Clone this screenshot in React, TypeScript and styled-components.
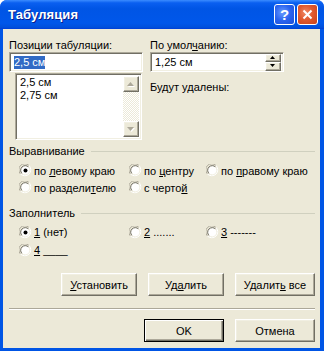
import React from 'react';
import styled, { createGlobalStyle, css } from 'styled-components';

const face = '#ECE9D8';

const GlobalStyle = createGlobalStyle`
  html, body {
    margin: 0;
    padding: 0;
    background: #fff;
  }
  body {
    font-family: "Liberation Sans", Arial, sans-serif;
    font-size: 11px;
    color: #000;
  }
`;

const sunken = css`
  box-sizing: border-box;
  border: 1px solid;
  border-color: #aca899 #fff #fff #aca899;
  box-shadow: inset 1px 1px #716f64, inset -1px -1px #f1efe2;
  background: #fff;
`;

const raised = css`
  box-sizing: border-box;
  border: 1px solid;
  border-color: #fff #716f64 #716f64 #fff;
  box-shadow: inset -1px -1px #aca899, inset 1px 1px #f1efe2;
  background: ${face};
`;

const Window = styled.div`
  width: 324px;
  height: 351px;
  box-sizing: border-box;
  display: flex;
  flex-direction: column;
  border-radius: 7px 7px 0 0;
  overflow: hidden;
  background: #0055e5;
`;

const TitleBar = styled.div`
  height: 29px;
  flex: none;
  display: flex;
  align-items: center;
  padding: 0 6px 0 8px;
  background: linear-gradient(
    to bottom,
    #3b8cff 0%,
    #0a5ff0 10%,
    #0055e5 30%,
    #0057ea 80%,
    #0050dc 94%,
    #003dd7 100%
  );
`;

const Title = styled.div`
  flex: 1;
  color: #fff;
  font-weight: bold;
  font-size: 13px;
  text-shadow: 1px 1px #0a1e8c;
  letter-spacing: 0.1px;
`;

const CapButton = styled.div<{ $red?: boolean }>`
  width: 21px;
  height: 21px;
  box-sizing: border-box;
  margin-left: 2px;
  border: 1px solid #fff;
  border-radius: 3px;
  display: flex;
  align-items: center;
  justify-content: center;
  color: #fff;
  font-weight: bold;
  font-size: 15px;
  background: ${(p) =>
    p.$red
      ? 'radial-gradient(circle at 40% 40%, #f08a66 0%, #e05a30 45%, #c8401a 100%)'
      : 'radial-gradient(circle at 40% 40%, #6a9cff 0%, #2a63ef 50%, #1a4fd8 100%)'};
`;

const Frame = styled.div`
  flex: 1;
  display: flex;
  padding: 0 4px 3px 3px;
`;

const Client = styled.div`
  flex: 1;
  background: ${face};
  padding: 10px 5px 0 6px;
  display: flex;
  flex-direction: column;
`;

const TopRow = styled.div`
  display: grid;
  grid-template-columns: 134px 134px;
  column-gap: 7px;
`;

const Column = styled.div`
  display: flex;
  flex-direction: column;
`;

const Label = styled.div<{ $mt?: number }>`
  height: 13px;
  line-height: 13px;
  margin-top: ${(p) => p.$mt ?? 0}px;
  white-space: nowrap;
`;

const U = styled.span`
  text-decoration: underline;
`;

const Field = styled.div`
  ${sunken};
  height: 20px;
  display: flex;
  align-items: center;
  padding: 0 2px 0 4px;
`;

const Selected = styled.span`
  background: #316ac5;
  color: #fff;
  line-height: 13px;
`;

const ListBox = styled.div`
  ${sunken};
  margin: 1px 0 0 6px;
  width: 127px;
  height: 67px;
  padding: 2px;
  display: flex;
`;

const Items = styled.div`
  flex: 1;
  padding-left: 2px;
`;

const Item = styled.div`
  height: 13px;
  line-height: 13px;
`;

const ScrollBar = styled.div`
  width: 16px;
  display: flex;
  flex-direction: column;
  justify-content: space-between;
  background: repeating-conic-gradient(#fff 0 25%, ${face} 0 50%) 0 0 / 2px 2px;
`;

const ScrollButton = styled.div`
  ${raised};
  width: 16px;
  height: 16px;
  display: flex;
  align-items: center;
  justify-content: center;
`;

const SpinBox = styled.div`
  display: flex;
  flex-direction: column;
  width: 16px;
  height: 17px;
  margin-left: auto;
`;

const SpinButton = styled.div`
  ${raised};
  flex: 1;
  display: flex;
  align-items: center;
  justify-content: center;
`;

const Group = styled.div<{ $mt: number }>`
  margin-top: ${(p) => p.$mt}px;
`;

const GroupHead = styled.div`
  display: flex;
  align-items: center;
  gap: 6px;
  height: 13px;
  line-height: 13px;
  &::after {
    content: '';
    flex: 1;
    border-top: 1px solid #d0d0bf;
  }
`;

const RadioGrid = styled.div<{ $row: number; $mt: number }>`
  display: grid;
  grid-template-columns: 110px 77px auto;
  grid-auto-rows: ${(p) => p.$row}px;
  padding-left: 10px;
  margin-top: ${(p) => p.$mt}px;
`;

const RadioItem = styled.label`
  display: flex;
  align-items: center;
  gap: 2px;
  white-space: nowrap;
`;

const ButtonRow = styled.div<{ $mt: number }>`
  display: flex;
  justify-content: flex-end;
  gap: 11px;
  margin-top: ${(p) => p.$mt}px;
`;

const Button = styled.div<{ $w: number; $default?: boolean }>`
  ${raised};
  width: ${(p) => p.$w}px;
  height: 23px;
  display: flex;
  align-items: center;
  justify-content: center;
  ${(p) =>
    p.$default &&
    css`
      border-color: #000;
      box-shadow: inset 1px 1px #fff, inset -1px -1px #716f64, inset -2px -2px #aca899;
    `}
`;

const Separator = styled.div`
  margin-top: 12px;
  height: 0;
  border-top: 1px solid #aca899;
  border-bottom: 1px solid #fff;
`;

const Radio: React.FC<{ checked?: boolean }> = ({ checked }) => (
  <svg width="13" height="13" viewBox="0 0 13 13">
    <path d="M1.5 10 A5.5 5.5 0 0 1 10 1.5" fill="none" stroke="#aca899" />
    <path d="M10 1.5 A5.5 5.5 0 0 1 1.5 10" fill="none" stroke="#fff" />
    <circle cx="6.5" cy="6.5" r="4.5" fill="#fff" />
    <path d="M3 9.5 A4.5 4.5 0 0 1 9.5 3" fill="none" stroke="#716f64" />
    <path d="M9.5 3 A4.5 4.5 0 0 1 3 9.5" fill="none" stroke="#f1efe2" />
    {checked && <circle cx="6.5" cy="6.5" r="2" fill="#000" />}
  </svg>
);

const Arrow: React.FC<{ down?: boolean; disabled?: boolean; small?: boolean }> = ({
  down,
  disabled,
  small,
}) => {
  const w = small ? 5 : 7;
  const h = small ? 3 : 4;
  const pts = down ? `0,0 ${w},0 ${w / 2},${h}` : `0,${h} ${w},${h} ${w / 2},0`;
  return (
    <svg width={w + 1} height={h + 1} viewBox={`0 0 ${w + 1} ${h + 1}`}>
      {disabled && <polygon points={pts} fill="#fff" transform="translate(1,1)" />}
      <polygon points={pts} fill={disabled ? '#aca899' : '#000'} />
    </svg>
  );
};

const CloseGlyph = () => (
  <svg width="11" height="11" viewBox="0 0 11 11">
    <path d="M1.5 1.5 L9.5 9.5 M9.5 1.5 L1.5 9.5" stroke="#fff" strokeWidth="2" />
  </svg>
);

export default function App() {
  return (
    <>
      <GlobalStyle />
      <Window>
        <TitleBar>
          <Title>Табуляция</Title>
          <CapButton>?</CapButton>
          <CapButton $red>
            <CloseGlyph />
          </CapButton>
        </TitleBar>
        <Frame>
          <Client>
            <TopRow>
              <Column>
                <Label>Позиции табуляции:</Label>
                <Field>
                  <Selected>2,5 см</Selected>
                </Field>
                <ListBox>
                  <Items>
                    <Item>2,5 см</Item>
                    <Item>2,75 см</Item>
                  </Items>
                  <ScrollBar>
                    <ScrollButton>
                      <Arrow disabled />
                    </ScrollButton>
                    <ScrollButton>
                      <Arrow down disabled />
                    </ScrollButton>
                  </ScrollBar>
                </ListBox>
              </Column>
              <Column>
                <Label>
                  По умол<U>ч</U>анию:
                </Label>
                <Field>
                  <span>1,25 см</span>
                  <SpinBox>
                    <SpinButton>
                      <Arrow small />
                    </SpinButton>
                    <SpinButton>
                      <Arrow small down />
                    </SpinButton>
                  </SpinBox>
                </Field>
                <Label $mt={9}>Будут удалены:</Label>
              </Column>
            </TopRow>

            <Group $mt={5}>
              <GroupHead>Выравнивание</GroupHead>
              <RadioGrid $row={17} $mt={4}>
                <RadioItem>
                  <Radio checked />
                  <span>
                    по <U>л</U>евому краю
                  </span>
                </RadioItem>
                <RadioItem>
                  <Radio />
                  <span>
                    по <U>ц</U>ентру
                  </span>
                </RadioItem>
                <RadioItem>
                  <Radio />
                  <span>
                    по <U>п</U>равому краю
                  </span>
                </RadioItem>
                <RadioItem>
                  <Radio />
                  <span>
                    по раздели<U>т</U>елю
                  </span>
                </RadioItem>
                <RadioItem>
                  <Radio />
                  <span>
                    с черто<U>й</U>
                  </span>
                </RadioItem>
              </RadioGrid>
            </Group>

            <Group $mt={11}>
              <GroupHead>Заполнитель</GroupHead>
              <RadioGrid $row={18} $mt={3}>
                <RadioItem>
                  <Radio checked />
                  <span>
                    <U>1</U> (нет)
                  </span>
                </RadioItem>
                <RadioItem>
                  <Radio />
                  <span>
                    <U>2</U> .......
                  </span>
                </RadioItem>
                <RadioItem>
                  <Radio />
                  <span>
                    <U>3</U> -------
                  </span>
                </RadioItem>
                <RadioItem>
                  <Radio />
                  <span>
                    <U>4</U> ____
                  </span>
                </RadioItem>
              </RadioGrid>
            </Group>

            <ButtonRow $mt={14}>
              <Button $w={76}>
                <span>
                  <U>У</U>становить
                </span>
              </Button>
              <Button $w={76}>
                <span>
                  Уд<U>а</U>лить
                </span>
              </Button>
              <Button $w={80}>
                <span>
                  Удалит<U>ь</U> все
                </span>
              </Button>
            </ButtonRow>

            <Separator />

            <ButtonRow $mt={9}>
              <Button $w={80} $default>
                OK
              </Button>
              <Button $w={80}>Отмена</Button>
            </ButtonRow>
          </Client>
        </Frame>
      </Window>
    </>
  );
}
